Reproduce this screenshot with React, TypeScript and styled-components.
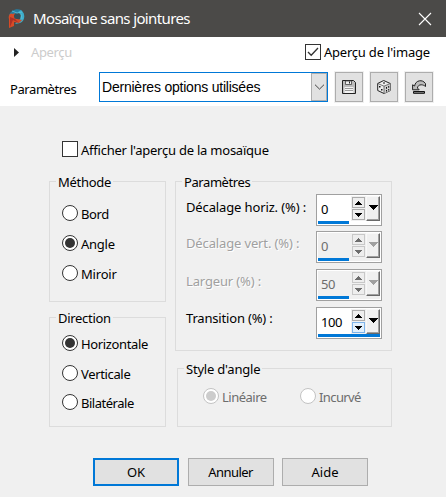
import React from "react";
import styled, { createGlobalStyle } from "styled-components";

const GlobalStyle = createGlobalStyle`
  *, *::before, *::after { box-sizing: border-box; }
  html, body { margin: 0; background: #f0f0f0; overflow: hidden; }
  body { font: 13px/18px "Noto Sans", "Open Sans", sans-serif; color: #000; }
`;

const Dialog = styled.main`
  width: 446px;
  height: 497px;
  background: #f0f0f0;
`;

const Text = styled.span<{ $spacing?: number; $tone?: string }>`
  white-space: nowrap;
  letter-spacing: ${(p) => p.$spacing ?? 0}px;
  color: ${(p) => p.$tone ?? "#000"};
`;

const TitleBar = styled.header`
  height: 37px;
  padding: 0 14px 0 8px;
  display: flex;
  align-items: center;
  background: #4b4a48;
`;

const Title = styled.h1`
  flex: 1;
  margin: -1px 0 0 8px;
  font-size: 15px;
  line-height: 20px;
  font-weight: 400;
  letter-spacing: -0.63px;
  color: #fff;
  white-space: nowrap;
`;

const Header = styled.section`
  height: 69px;
  background: #fff;
`;

const PreviewRow = styled.div`
  height: 29px;
  padding: 1px 16px 0 14px;
  display: flex;
  align-items: center;
  justify-content: space-between;
`;

const PreviewToggle = styled.div`
  display: flex;
  align-items: center;
  gap: 12px;
`;

const PresetRow = styled.div`
  height: 40px;
  padding: 5px 12px 0 10px;
  display: flex;
  align-items: flex-start;
`;

const PresetLabel = styled.label`
  flex: none;
  width: 89px;
  padding-top: 9px;
  letter-spacing: -0.42px;
`;

const Combo = styled.div`
  flex: none;
  width: 229px;
  height: 30px;
  margin: 1px 6px 0 0;
  display: flex;
  align-items: stretch;
  justify-content: space-between;
  border: 1px solid #0078d7;
  background: #fff;
  font: 14px/29px "Liberation Sans", Arial, sans-serif;
  letter-spacing: -0.22px;
  padding-left: 2px;
`;

const ComboArrow = styled.span`
  width: 16px;
  display: grid;
  place-items: center;
  border: 1px solid #adadad;
  background: #e1e1e1;
`;

const ToolButton = styled.button`
  flex: none;
  width: 30px;
  height: 32px;
  margin: 0 5px 0 0;
  padding: 0;
  display: grid;
  place-items: center;
  border: 1px solid #f0f0f0;
  outline: 1px solid #adadad;
  outline-offset: -2px;
  background: #e1e1e1;
`;

const Check = styled.span`
  width: 16px;
  height: 16px;
  flex: none;
  display: grid;
  place-items: center;
  border: 1px solid #333;
  background: #fff;
`;

const CheckLabel = styled.label`
  display: flex;
  align-items: center;
  gap: 3px;
`;

const Body = styled.section`
  padding: 35px 54px 0 49px;
`;

const MosaicOption = styled(CheckLabel)`
  height: 16px;
  margin-left: 13px;

  ${Text} { padding-top: 2px; }
`;

const Columns = styled.div`
  margin-top: 24px;
  display: flex;
  justify-content: space-between;
`;

const Column = styled.div<{ $width: number }>`
  width: ${(p) => p.$width}px;
  display: flex;
  flex-direction: column;
  align-items: flex-end;
  justify-content: space-between;
  height: 246px;
`;

const Group = styled.section<{ $height: number; $width?: number }>`
  width: ${(p) => (p.$width ? `${p.$width}px` : "100%")};
  height: ${(p) => p.$height}px;
  border: 1px solid #dcdcdc;
`;

const Legend = styled.h2<{ $spacing?: number }>`
  width: max-content;
  height: 18px;
  margin: -9px 0 0 6px;
  padding: 0 2px;
  background: #f0f0f0;
  font-size: 13px;
  font-weight: 400;
  line-height: 18px;
  white-space: nowrap;
  letter-spacing: ${(p) => p.$spacing ?? -0.3}px;
`;

const RadioStack = styled.div<{ $top: number; $gap: number }>`
  padding: ${(p) => p.$top}px 0 0 12px;
  display: flex;
  flex-direction: column;
  gap: ${(p) => p.$gap}px;
`;

const RadioRow = styled.div`
  padding: 10px 0 0 25px;
  display: flex;
`;

const RadioLabel = styled.label<{ $width?: number }>`
  width: ${(p) => (p.$width ? `${p.$width}px` : "auto")};
  height: 16px;
  display: flex;
  align-items: center;
  gap: 3px;

  ${Text} { padding-top: 2px; }
`;

const Dot = styled.span<{ $off?: boolean; $on?: boolean }>`
  width: 16px;
  height: 16px;
  flex: none;
  display: grid;
  place-items: center;
  border: 1px solid ${(p) => (p.$off ? "#c3c3c3" : "#333")};
  border-radius: 50%;
  background: #fff;

  &::after {
    content: "";
    width: 10px;
    height: 10px;
    border-radius: 50%;
    background: ${(p) => (!p.$on ? "transparent" : p.$off ? "#ccc" : "#333")};
  }
`;

const Fields = styled.div`
  padding: 3px 9px 0 10px;
  display: grid;
  grid-template-rows: 37px 38px 38px 32px;
`;

const Field = styled.div`
  display: flex;
  align-items: flex-start;
  justify-content: space-between;
`;

const FieldLabel = styled.label<{ $spacing: number; $off?: boolean; $top: number }>`
  padding-top: ${(p) => p.$top}px;
  letter-spacing: ${(p) => p.$spacing}px;
  white-space: nowrap;
  color: ${(p) => (p.$off ? "#a0a0a0" : "#000")};
  text-shadow: ${(p) => (p.$off ? "1px 1px 0 #fff" : "none")};
`;

const Spinner = styled.div<{ $off?: boolean }>`
  width: 66px;
  height: 32px;
  padding: 1px;
  display: grid;
  grid-template-columns: 33px 15px 14px;
  grid-template-rows: 25px 3px;
  border: 1px solid #a0a0a0;
  background: ${(p) => (p.$off ? "#f0f0f0" : "#fff")};
  outline: ${(p) => (p.$off ? "1px solid #fff" : "none")};
  outline-offset: -2px;
`;

const Value = styled.span<{ $off?: boolean }>`
  padding: 4px 0 0 3px;
  letter-spacing: -0.4px;
  color: ${(p) => (p.$off ? "#6d6d6d" : "#000")};
`;

const Steps = styled.span`
  padding: 1px 1px 0;
  display: grid;
  grid-template-rows: 11px 11px;
  gap: 1px;
  background: #f0f0f0;
`;

const Step = styled.span<{ $hot?: boolean; $off?: boolean }>`
  display: grid;
  place-items: center;
  border: 1px solid ${(p) => (p.$hot ? "#7eb4ea" : p.$off ? "#c8c8c8" : "#acacac")};
  background: ${(p) => (p.$hot ? "#e2f0fc" : "#eeeeee")};
`;

const Drop = styled.span`
  height: 25px;
  padding-bottom: 3px;
  display: grid;
  place-items: center;
  border: 1px solid #f8f8f8;
  border-right: 1px solid #696969;
  border-bottom: 1px solid #696969;
  box-shadow: inset -1px -1px #a0a0a0;
  background: #f0f0f0;
`;

const Track = styled.span<{ $full?: boolean }>`
  grid-column: 1 / -1;
  width: ${(p) => (p.$full ? 62 : 31)}px;
  height: 3px;
  background: #0078d7;
`;

const Actions = styled.footer`
  margin: 31px 0 0 44px;
  display: grid;
  grid-template-columns: 86px 86px 86px;
  column-gap: 8.5px;
`;

const Action = styled.button<{ $primary?: boolean; $spacing?: number }>`
  height: 28px;
  padding: 0;
  border: ${(p) => (p.$primary ? "2px solid #0078d7" : "1px solid #adadad")};
  background: #e1e1e1;
  color: #000;
  font: inherit;
  letter-spacing: ${(p) => p.$spacing ?? 0}px;
`;

const Logo = () => (
  <svg width="17" height="20" viewBox="0 0 17 20">
    <path d="M1 7C2 1 9-1 13 1l3 4-5-1-5 1Z" fill="#267da1" />
    <path d="M13 1c5 4 4 11-1 13l-5 1 5-5 1-4-3-3Z" fill="#3dacc9" />
    <path d="M5 5C2 3 0 7 1 10v9l5-2v-4l5 1 3-3-5-1-3-3 1-3Z" fill="#d64b27" />
    <path d="M2 8v10l3-7 6 3-4-4Z" fill="#ac3027" />
    <ellipse cx="9" cy="7.5" rx="3" ry="2.5" fill="#344e59" />
    <path d="m4 2 5 2 5-1M13 5l1 5" fill="none" stroke="#5ac3d9" strokeWidth=".8" />
  </svg>
);

const Floppy = () => (
  <svg width="14" height="14" viewBox="0 0 14 14">
    <path d="M.5.5h11l2 2v11H.5Z" fill="#bcbcbc" stroke="#222" />
    <path d="M3.5 1h6v3.5h-6Z" fill="#eee" stroke="#444" strokeWidth=".8" />
    <path d="M7.5 1.5v2" stroke="#222" />
    <path d="M2.5 7h9v6h-9Z" fill="#f4f4f4" />
    <path d="M3 8.5h8m-8 2h8" stroke="#999" />
  </svg>
);

const Dice = () => (
  <svg width="14" height="14" viewBox="0 0 14 14">
    <path d="m.7 3.5 6-3 6.6 3v7L7 13.5l-6.3-3Z" fill="#eee" stroke="#222" />
    <path d="m7 6.2 6.3-2.7v7L7 13.4Z" fill="#ccc" />
    <path d="m.8 3.5 6.2 2.7 6.3-2.7M7 6.2v7" fill="none" stroke="#555" strokeWidth=".8" />
    <path d="M2 6h1.5v1.5H2Zm2 3h1.5v1.5H4Zm5-2h1v1.7H9Zm2.2-1h1v1.7h-1ZM9 10h1v1.5H9Zm2.2-1h1v1.5h-1ZM6 2.6h2v1H6Z" fill="#111" />
  </svg>
);

const Undo = () => (
  <svg width="15" height="14" viewBox="0 0 15 14">
    <path d="M.6 4.8v5h6.6L5.4 8c.4-2 1.6-3.2 3.8-3.2 1.6 0 3 .6 4.3 1.7V3.6C11.700 1 9.500.5 7.500.8 4.800 1.200 3 3.200 2.600 6Z" fill="#bbb" stroke="#222" />
    <path d="M1.500 11.500h11v1.800h-11Z" fill="#888" stroke="#111" />
  </svg>
);

const Triangle = ({ up = false, off = false, wide = false }) => (
  <svg width={wide ? 9 : 7} height={wide ? 5 : 4} viewBox="0 0 9 5" preserveAspectRatio="none" shapeRendering="crispEdges">
    <path d={up ? "M0 5 4.5 0 9 5Z" : "M0 0h9L4.5 5Z"} fill={off ? (wide ? "#a0a0a0" : "#6d6d6d") : "#000"} />
  </svg>
);

type RadioProps = { text: string; on?: boolean; off?: boolean; spacing?: number; width?: number };

const Radio = ({ text, on, off, spacing = -0.35, width }: RadioProps) => (
  <RadioLabel $width={width}>
    <Dot $on={on} $off={off} />
    <Text $spacing={spacing} $tone={off ? "#6d6d6d" : "#000"}>{text}</Text>
  </RadioLabel>
);

const fields = [
  { label: "Décalage horiz. (%) :", value: "0", spacing: -0.13, top: 4 },
  { label: "Décalage vert. (%) :", value: "0", off: true, spacing: -0.14, top: 3 },
  { label: "Largeur (%) :", value: "50", off: true, spacing: -0.14, top: 3 },
  { label: "Transition (%) :", value: "100", spacing: -0.18, full: true, top: 2 },
];

export default function App() {
  return (
    <Dialog>
      <GlobalStyle />
      <TitleBar>
        <Logo />
        <Title>Mosaïque sans jointures</Title>
        <svg width="14" height="14" viewBox="0 0 14 14">
          <path d="m1 1 12 12M13 1 1 13" stroke="#fff" strokeWidth="1.1" />
        </svg>
      </TitleBar>
      <Header>
        <PreviewRow>
          <PreviewToggle>
            <svg width="5" height="9" viewBox="0 0 5 9"><path d="M0 0v9l5-4.5Z" fill="#222" /></svg>
            <Text $tone="#ccc" $spacing={-0.35}>Aperçu</Text>
          </PreviewToggle>
          <CheckLabel>
            <Check>
              <svg width="12" height="10" viewBox="0 0 12 10">
                <path d="m1 5 3.2 3.3L11 1" fill="none" stroke="#333" strokeWidth="1.3" />
              </svg>
            </Check>
            <Text $spacing={-0.2}>Aperçu de l'image</Text>
          </CheckLabel>
        </PreviewRow>
        <PresetRow>
          <PresetLabel>Paramètres</PresetLabel>
          <Combo>
            <span>Dernières options utilisées</span>
            <ComboArrow>
              <svg width="9" height="6" viewBox="0 0 9 6"><path d="m0 .7 4.5 4.4L9 .7" fill="none" stroke="#444" /></svg>
            </ComboArrow>
          </Combo>
          <ToolButton aria-label="Enregistrer"><Floppy /></ToolButton>
          <ToolButton aria-label="Aléatoire"><Dice /></ToolButton>
          <ToolButton aria-label="Réinitialiser"><Undo /></ToolButton>
        </PresetRow>
      </Header>
      <Body>
        <MosaicOption>
          <Check />
          <Text $spacing={-0.23}>Afficher l'aperçu de la mosaïque</Text>
        </MosaicOption>
        <Columns>
          <Column $width={117}>
            <Group $height={121}>
              <Legend>Méthode</Legend>
              <RadioStack $top={14} $gap={14}>
                <Radio text="Bord" />
                <Radio text="Angle" on spacing={-0.25} />
                <Radio text="Miroir" spacing={-0.2} />
              </RadioStack>
            </Group>
            <Group $height={110}>
              <Legend>Direction</Legend>
              <RadioStack $top={8} $gap={13.5}>
                <Radio text="Horizontale" on />
                <Radio text="Verticale" />
                <Radio text="Bilatérale" spacing={-0.48} />
              </RadioStack>
            </Group>
          </Column>
          <Column $width={217}>
            <Group $height={170}>
              <Legend $spacing={-0.42}>Paramètres</Legend>
              <Fields>
                {fields.map((f) => (
                  <Field key={f.label}>
                    <FieldLabel $spacing={f.spacing} $off={f.off} $top={f.top}>{f.label}</FieldLabel>
                    <Spinner $off={f.off}>
                      <Value $off={f.off}>{f.value}</Value>
                      <Steps>
                        <Step $off={f.off}><Triangle up off={f.off} /></Step>
                        <Step $off={f.off} $hot={f.full}><Triangle off={f.off} /></Step>
                      </Steps>
                      <Drop><Triangle wide off={f.off} /></Drop>
                      <Track $full={f.full} />
                    </Spinner>
                  </Field>
                ))}
              </Fields>
            </Group>
            <Group $height={59} $width={215}>
              <Legend $spacing={-0.2}>Style d'angle</Legend>
              <RadioRow>
                <Radio text="Linéaire" on off width={97} spacing={-0.5} />
                <Radio text="Incurvé" off spacing={-0.6} />
              </RadioRow>
            </Group>
          </Column>
        </Columns>
        <Actions>
          <Action $primary>OK</Action>
          <Action $spacing={-0.55}>Annuler</Action>
          <Action>Aide</Action>
        </Actions>
      </Body>
    </Dialog>
  );
}
